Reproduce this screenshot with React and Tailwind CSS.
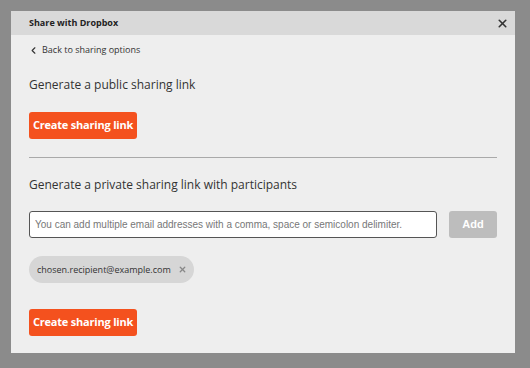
import { ChevronLeft, X } from "lucide-react";

const font = { fontFamily: '"Open Sans", sans-serif' };

const CreateButton = () => (
  <button className="flex h-[27px] w-[108px] items-center justify-center whitespace-nowrap rounded-[3px] bg-[#f4511e] text-[11px] font-bold tracking-[-0.2px] text-white">
    Create sharing link
  </button>
);

export default function App() {
  return (
    <div
      className="h-[368px] w-[530px] bg-[#8b8b8b] pl-[11px] pt-[11px]"
      style={font}
    >
      <div className="flex h-[342px] w-[504px] flex-col bg-[#eeeeee]">
        {/* header */}
        <div className="flex h-[24px] shrink-0 items-center justify-between bg-[#d9d9d9] pl-[18px] pr-[6px]">
          <span className="text-[9px] font-bold text-[#222]">Share with Dropbox</span>
          <X size={13} strokeWidth={3} className="text-[#333]" />
        </div>

        <div className="flex flex-col px-[18px]">
          <div className="mt-[8px] flex h-[14px] items-center gap-[3px] text-[9px] text-[#333]">
            <ChevronLeft size={11} strokeWidth={2.5} className="-ml-[1px]" />
            <span>Back to sharing options</span>
          </div>

          <h2 className="mt-[19px] text-[12px] leading-[18px] text-[#333]">
            Generate a public sharing link
          </h2>

          <div className="mt-[18px] flex">
            <CreateButton />
          </div>

          <div className="mt-[18px] h-px w-[468px] bg-[#a9a9a9]" />

          <h2 className="mt-[18px] text-[12px] leading-[18px] text-[#333]">
            Generate a private sharing link with participants
          </h2>

          <div className="mt-[17px] flex items-center gap-[12px]">
            <input
              className="h-[27px] w-[408px] rounded-[3px] border border-[#555] bg-white px-[5px] text-[10px] outline-none placeholder:text-[#777]"
              style={{ fontFamily: '"Liberation Sans", Arial, sans-serif' }}
              placeholder="You can add multiple email addresses with a comma, space or semicolon delimiter."
            />
            <button
              className="h-[27px] w-[48px] rounded-[3px] bg-[#bdbdbd] text-[11px] font-bold text-white"
              style={{ fontFamily: '"Liberation Sans", Arial, sans-serif' }}
            >
              Add
            </button>
          </div>

          <div className="mt-[18px] flex">
            <div className="flex h-[27px] items-center gap-[7px] rounded-full bg-[#d6d6d6] pl-[8px] pr-[7px] text-[9px] text-[#333]">
              <span>chosen.recipient@example.com</span>
              <X size={9} strokeWidth={3.5} className="text-[#888]" />
            </div>
          </div>

          <div className="mt-[26px] flex">
            <CreateButton />
          </div>
        </div>
      </div>
    </div>
  );
}
